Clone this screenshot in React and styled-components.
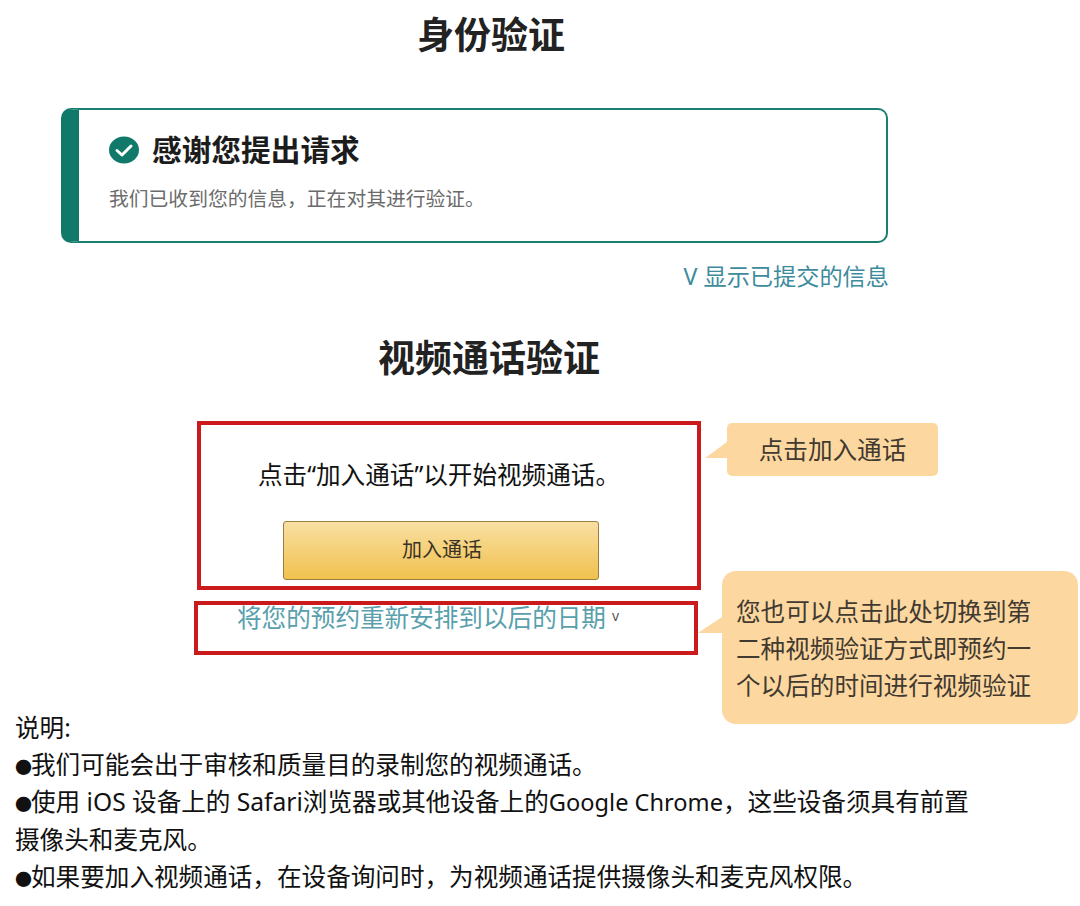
import styled, { createGlobalStyle } from "styled-components";

const GlobalStyle = createGlobalStyle`
body {
    margin: 0;
    background: #fff;
    font-family: "Noto Sans", "Noto Sans CJK SC", sans-serif;
    color: #111;
}
`

const CheckIcon = () => (
    <svg width="30" height="28" viewBox="0 0 30 28">
        <ellipse cx="15" cy="14" rx="15" ry="13.5" fill="#10796a" />
        <path d="M8 14.5l5 4.5 9-9" fill="none" stroke="#fff" strokeWidth="3" strokeLinecap="round" strokeLinejoin="round" />
    </svg>
)

const App = () => {
    return (
        <Page>
            <GlobalStyle />
            <Title $top={7} $width={982}>身份验证</Title>

            <Card>
                <CardBody>
                    <CardHead>
                        <CheckIcon />
                        <CardTitle>感谢您提出请求</CardTitle>
                    </CardHead>
                    <CardText>我们已收到您的信息，正在对其进行验证。</CardText>
                </CardBody>
            </Card>
            <ShowLink>V 显示已提交的信息</ShowLink>

            <Title $top={37} $width={978}>视频通话验证</Title>

            <CallRow $top={35}>
                <JoinBox>
                    <JoinText>点击“加入通话”以开始视频通话。</JoinText>
                    <JoinButton>加入通话</JoinButton>
                </JoinBox>
                <Bubble $width={211} $height={53} $left={26} $top={2} $tailTop={19} $tail={22}>
                    <BubbleLabel>点击加入通话</BubbleLabel>
                </Bubble>
            </CallRow>

            <CallRow $top={11}>
                <LaterBox>
                    <LaterLink>将您的预约重新安排到以后的日期<Caret>v</Caret></LaterLink>
                </LaterBox>
                <Bubble $width={356} $height={153} $left={24} $top={-30} $tailTop={46} $tail={24} $radius={14}>
                    <BubbleText>
                        您也可以点击此处切换到第<br />
                        二种视频验证方式即预约一<br />
                        个以后的时间进行视频验证
                    </BubbleText>
                </Bubble>
            </CallRow>

            <Notes>
                <div>说明:</div>
                <div><Dot>●</Dot>我们可能会出于审核和质量目的录制您的视频通话。</div>
                <div><Dot>●</Dot>使用 iOS 设备上的 Safari浏览器或其他设备上的<Latin>Google Chrome</Latin>，这些设备须具有前置<br />摄像头和麦克风。</div>
                <div><Dot>●</Dot>如果要加入视频通话，在设备询问时，为视频通话提供摄像头和麦克风权限。</div>
            </Notes>
        </Page>
    )
}

export default App;

const Page = styled.div`
width: 1080px;
min-height: 906px;
overflow: hidden;
`

const Title = styled.h1`
width: ${p => p.$width}px;
margin: ${p => p.$top}px 0 0;
font-size: 37px;
line-height: 56px;
font-weight: 700;
text-align: center;
color: #222;
`

const Card = styled.div`
width: 827px;
height: 135px;
margin: 45px 0 0 61px;
box-sizing: border-box;
border: 2.5px solid #1a7f70;
border-left: 18px solid #10796a;
border-radius: 10px;
`

const CardBody = styled.div`
padding: 18px 0 0 30px;
`

const CardHead = styled.div`
display: flex;
align-items: center;
gap: 13px;
`

const CardTitle = styled.div`
font-size: 29.7px;
line-height: 44px;
font-weight: 700;
color: #1c1c1c;
`

const CardText = styled.div`
margin-top: 13px;
font-size: 19.8px;
line-height: 28px;
color: #6b6b6b;
`

const ShowLink = styled.div`
width: 889px;
margin-top: 16px;
font-size: 23.2px;
line-height: 34px;
text-align: right;
color: #3d8b9c;
`

const CallRow = styled.div`
display: flex;
align-items: flex-start;
margin-top: ${p => p.$top}px;
`

const JoinBox = styled.div`
width: 504px;
height: 169px;
margin-left: 197px;
box-sizing: border-box;
border: 4px solid #cb1a1c;
display: flex;
flex-direction: column;
align-items: center;
`

const JoinText = styled.div`
margin-top: 32px;
padding-right: 20px;
font-size: 24.6px;
line-height: 36px;
color: #111;
`

const JoinButton = styled.button`
width: 316px;
height: 59px;
margin: 28px 0 0 -16px;
padding: 0 0 4px 2px;
border: 1px solid #9c7f3e;
border-radius: 3px;
background: linear-gradient(#f8dfa2, #f1c14e);
font-family: inherit;
font-size: 20px;
color: #3a3224;
`

const LaterBox = styled.div`
width: 504px;
height: 54px;
margin-left: 194px;
box-sizing: border-box;
border: 4px solid #cb1a1c;
`

const LaterLink = styled.div`
margin: -7px 0 0 39px;
font-size: 24.6px;
line-height: 36px;
white-space: nowrap;
color: #59a0ac;
`

const Caret = styled.span`
margin-left: 6px;
font-size: 14px;
vertical-align: 6px;
color: #555;
`

const Bubble = styled.div`
position: relative;
width: ${p => p.$width}px;
height: ${p => p.$height}px;
margin: ${p => p.$top}px 0 0 ${p => p.$left}px;
border-radius: ${p => p.$radius || 5}px;
background: #fdd7a0;
color: #413a30;

&::before {
    content: "";
    position: absolute;
    top: ${p => p.$tailTop}px;
    left: -${p => p.$tail}px;
    width: ${p => p.$tail}px;
    height: 16px;
    background: #fdd7a0;
    clip-path: polygon(100% 0, 100% 100%, 0 100%);
}
`

const BubbleLabel = styled.div`
font-size: 24.6px;
line-height: 53px;
text-align: center;
`

const BubbleText = styled.div`
padding: 22px 0 0 14px;
font-size: 24.6px;
line-height: 37px;
white-space: nowrap;
`

const Notes = styled.div`
margin: -15px 0 0 15px;
font-size: 24.6px;
line-height: 37px;
white-space: nowrap;
color: #111;
`

const Dot = styled.span`
display: inline-block;
width: 16px;
font-size: 17px;
line-height: 1;
`

const Latin = styled.span`
font-size: 23.6px;
`
